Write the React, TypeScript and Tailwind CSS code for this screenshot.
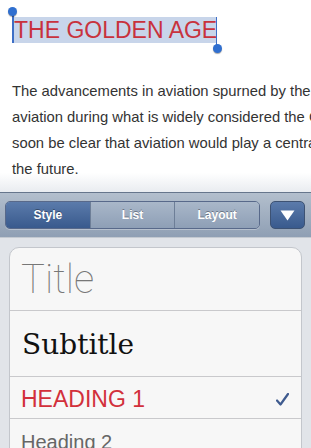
import React from 'react';

const lines = [
  'The advancements in aviation spurned by the First World War',
  'aviation during what is widely considered the Golden Age of',
  'soon be clear that aviation would play a central role in',
  'the future.',
];

const segments = [
  { label: 'Style', active: true },
  { label: 'List', active: false },
  { label: 'Layout', active: false },
];

export default function App() {
  return (
    <div className="w-[311px] h-[448px] overflow-hidden bg-white font-['Liberation_Sans',Arial,sans-serif]">
      {/* document */}
      <div className="h-[192px] pt-[17px] bg-gradient-to-b from-white from-[90%] to-[#e9ecf0]">
        <div className="relative ml-[12px] w-[205px] h-[26px] bg-[#c8d5ea]">
          <div className="absolute left-0 top-[-6px] w-[1.5px] h-[32px] bg-[#3e6fc6]" />
          <div className="absolute left-[-4.5px] top-[-10px] w-[9px] h-[9px] rounded-full bg-[#2f6fd0] shadow-[0_1px_1px_rgba(0,0,0,0.35)]" />
          <div className="absolute right-0 top-0 w-[1.5px] h-[32px] bg-[#3e6fc6]" />
          <div className="absolute right-[-4.5px] top-[27px] w-[9px] h-[9px] rounded-full bg-[#2f6fd0] shadow-[0_1px_1px_rgba(0,0,0,0.35)]" />
          <div className="pl-[2px] pt-[2px] text-[23px] leading-[23px] text-[#c8323d] whitespace-nowrap">
            THE GOLDEN AGE
          </div>
        </div>
        <div className="mt-[35px] pl-[12px] text-[14.8px] leading-[26px] text-[#333]">
          {lines.map((line) => (
            <div key={line} className="whitespace-nowrap">{line}</div>
          ))}
        </div>
      </div>

      {/* toolbar */}
      <div className="h-[45px] border-t border-[#66768c] bg-gradient-to-b from-[#b3bfcd] to-[#8f9fb4] flex items-center px-[5px] gap-[10px]">
        <div className="flex h-[28px] w-[255px] rounded-[5px] border border-[#58698a] overflow-hidden shadow-[0_1px_0_rgba(255,255,255,0.3)]">
          {segments.map((s, i) => (
            <div
              key={s.label}
              className={
                'flex-1 flex items-center justify-center text-[12px] font-bold text-white [text-shadow:0_-1px_0_rgba(0,0,0,0.35)] ' +
                (i > 0 ? 'border-l border-[#6d7e97] ' : '') +
                (s.active
                  ? 'bg-gradient-to-b from-[#5b7bab] to-[#395a8d]'
                  : 'bg-gradient-to-b from-[#a9b7c9] to-[#8e9fb6]')
              }
            >
              {s.label}
            </div>
          ))}
        </div>
        <div className="flex h-[28px] w-[35px] items-center justify-center rounded-[5px] border border-[#3d5273] bg-gradient-to-b from-[#5b7bab] to-[#395a8d]">
          <svg width="15" height="11" viewBox="0 0 15 11">
            <path d="M0.5 0.5 H14.5 L7.5 10.5 Z" fill="#ffffff" />
          </svg>
        </div>
      </div>

      {/* style list */}
      <div className="h-[211px] bg-[#e1e4e9] border-t border-[#c3c9d1] pt-[9px] px-[9px]">
        <div className="rounded-[10px] border border-[#c3c6cc] bg-[#f7f7f7] overflow-hidden">
          <div className="h-[63px] border-b border-[#c9c9cc] pl-[11px] pt-[12px] text-[40px] leading-[40px] font-thin text-[#777] font-['Roboto',sans-serif]">
            Title
          </div>
          <div className="h-[66px] border-b border-[#c9c9cc] pl-[12px] pt-[20px] text-[28px] leading-[28px] text-[#111] font-['DejaVu_Serif',serif]">
            Subtitle
          </div>
          <div className="h-[42px] border-b border-[#c9c9cc] pl-[11px] pr-[11px] pt-[11px] flex justify-between items-start">
            <span className="text-[23px] leading-[23px] text-[#d2303b]">HEADING 1</span>
            <svg width="13" height="13" viewBox="0 0 13 13" className="mt-[5px] mr-[1px]">
              <path d="M1 7.5 L4.5 11.5 L12 1" fill="none" stroke="#3f5b8f" strokeWidth="2.2" strokeLinecap="round" strokeLinejoin="round" />
            </svg>
          </div>
          <div className="h-[60px] pl-[11px] pt-[13px] text-[20px] leading-[20px] text-[#666]">
            Heading 2
          </div>
        </div>
      </div>
    </div>
  );
}
